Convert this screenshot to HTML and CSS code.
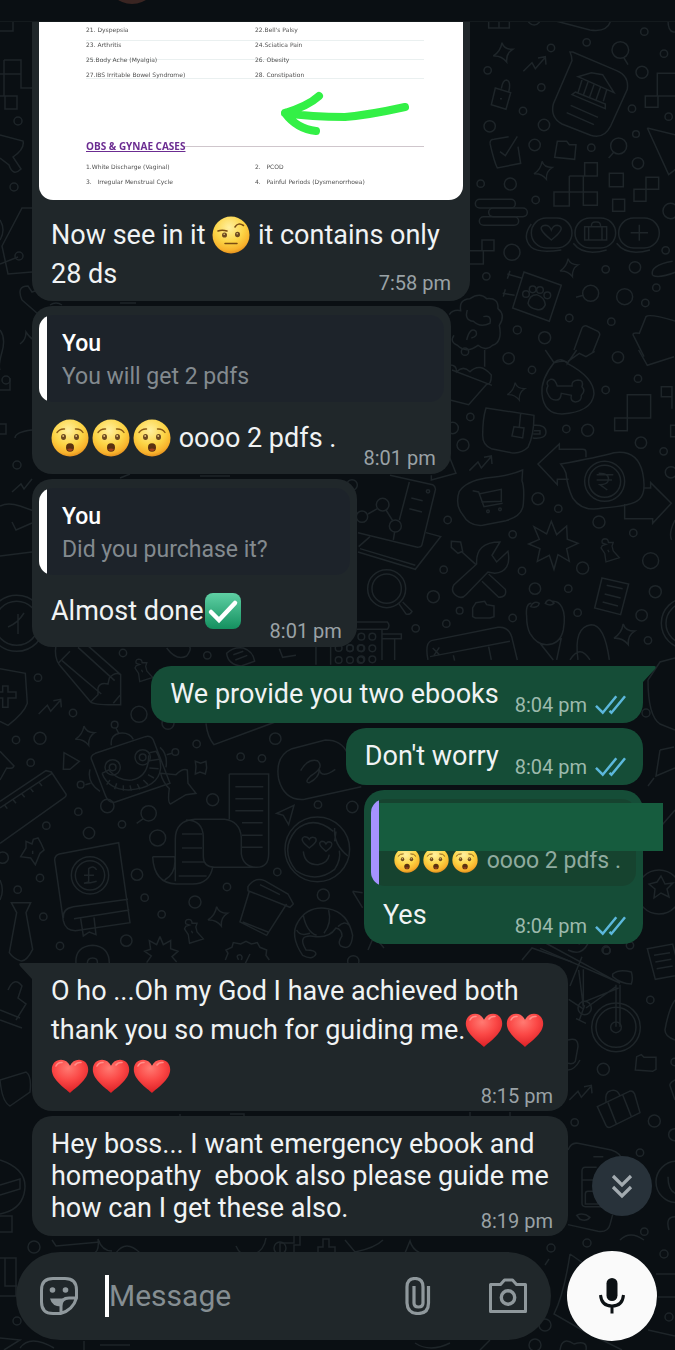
FILE: index.html
```html
<!DOCTYPE html>
<html lang="en">
<head>
<meta charset="utf-8">
<meta name="viewport" content="width=device-width, initial-scale=1">
<title>Chat</title>
<link rel="stylesheet" href="styles.css">
</head>
<body>
<svg class="defs" aria-hidden="true">
  <defs>
    <radialGradient id="face" cx="45%" cy="30%" r="72%">
      <stop offset="0" stop-color="#fff0a0"/><stop offset=".55" stop-color="#fcd445"/><stop offset=".85" stop-color="#f8b22c"/><stop offset="1" stop-color="#e08a1c"/>
    </radialGradient>
    <radialGradient id="red" cx="45%" cy="25%" r="75%">
      <stop offset="0" stop-color="#ff7a72"/><stop offset=".5" stop-color="#fb4846"/><stop offset="1" stop-color="#dc2026"/>
    </radialGradient>
    <linearGradient id="green" x1="0" y1="0" x2="0" y2="1">
      <stop offset="0" stop-color="#5fd0a4"/><stop offset="1" stop-color="#14905f"/>
    </linearGradient>
    <symbol id="wow" viewBox="0 0 38 38">
      <circle cx="19" cy="19" r="18.5" fill="url(#face)"/>
      <g fill="none" stroke="#8a5a16" stroke-width="1.4" stroke-linecap="round"><path d="M6 13.5q3-4 7.500-3.500M24.500 10q5-.5 7.500 3.500"/></g>
      <g fill="#6d4a20"><ellipse cx="12.500" cy="18" rx="2.500" ry="3"/><ellipse cx="25.500" cy="18" rx="2.500" ry="3"/></g>
      <g fill="#e8c878"><circle cx="12.200" cy="17" r=".9"/><circle cx="25.200" cy="17" r=".9"/></g>
      <ellipse cx="19" cy="28.500" rx="4" ry="4.200" fill="#5a3010"/><path d="M16 30.500q3-2 6 0-3 3-6 0z" fill="#a2401c"/>
    </symbol>
    <symbol id="brow" viewBox="0 0 38 38">
      <circle cx="19" cy="19" r="18.500" fill="url(#face)"/>
      <g fill="none" stroke="#7a4c12" stroke-width="1.500" stroke-linecap="round"><path d="M6 15q4-1.500 9 0M23 11q3-5 8.500-1.500M13 27.500h12"/></g>
      <g fill="#6d4a20"><ellipse cx="12.500" cy="19" rx="2.500" ry="2.600"/><ellipse cx="25.500" cy="18.500" rx="2.500" ry="2.800"/></g>
      <g fill="#e8c878"><circle cx="12.200" cy="18.200" r=".8"/><circle cx="25.200" cy="17.700" r=".8"/></g>
    </symbol>
    <symbol id="heart" viewBox="0 0 38 38">
      <path d="M19 36C14 31 .8 23 .8 12.500.8 6.500 5 2.800 10 2.800c4 0 7.200 2.200 9 6 1.800-3.800 5-6 9-6 5 0 9.200 3.700 9.200 9.700C37.200 23 24 31 19 36z" fill="url(#red)"/>
      <path d="M5 9q2-4 6-3.500M24 8q2-3 6-2.500" fill="none" stroke="#ff9f98" stroke-width="1.600" stroke-linecap="round" opacity=".8"/>
    </symbol>
    <symbol id="tick" viewBox="0 0 38 38">
      <rect x="1" y="1" width="36" height="36" rx="8" fill="url(#green)"/>
      <path d="M7 20l8 8 16-17" fill="none" stroke="#fff" stroke-width="4.500" stroke-linecap="round"/>
    </symbol>
    <symbol id="read" viewBox="0 0 32 20">
      <path d="M1 11l7 7L22 1M15 16l2 2L31 1" fill="none" stroke="#5cb8dc" stroke-width="2.600"/>
    </symbol>
    <symbol id="spark" viewBox="-30 -30 60 60" overflow="visible"><path d="M-4-30Q2-10 28-10 8 2 10 28-6 8-30 10-8-4-4-30z"/></symbol>
    <symbol id="zig" viewBox="0 0 70 50" overflow="visible"><path d="M0 46L26 20 36 38 64 6M44 6l22-4 2 24"/></symbol>
    <symbol id="pin" viewBox="0 0 70 80" overflow="visible"><path d="M12 14q-4-12 8-14 12 0 12 12l16 0-4 12 4 16 20 22-44 14-4-28-12-18 4-8 12-4zM30 36l4 8"/></symbol>
  </defs>
</svg>

<div class="app">
  <svg class="wallpaper" viewBox="0 0 675 1350" preserveAspectRatio="xMidYMin slice" aria-hidden="true">
    <g transform="translate(440 0) scale(.3333)">
      <path d="M146 50v34h62V50M177 50v34M265 66q18 18 34 0M350 64l100 26q50 8 62-26M684 60q0 34 16 36h20"/>
      <use href="#spark" x="160" y="128" width="60" height="60"/><use href="#zig" x="250" y="168" width="70" height="50"/>
      <use href="#spark" x="282" y="484" width="56" height="56"/><use href="#spark" x="360" y="776" width="56" height="56"/>
      <path d="M398 156l132 56q38 16 32 56l-50 110q-20 40-60 28l-86-34q-36-20-26-60l56-130q0-14-6-26z"/>
      <path d="M414 230l40-12 34 6 34 54zM426 240l-12 38M444 246l-14 40M462 254l-14 40M482 260l-14 40M500 270l-10 34M406 276l90 36v14l-100-42zM392 316l82 36M380 338l82 36"/>
      <path d="M166 264l46 14-14 50-44-14zM184 266q4-26 16-26 14 4 6 36M180 296h6"/>
      <path d="M150 430q0-12 12-12l44-8M234 440l8 50-70 14q-10-20-22-74M180 455l16 12 36-58"/>
      <path d="M352 424h28l8 10h20l-4 44-60-6zM652 720"/>
      <circle cx="541" cy="150" r="25"/><path d="M552 174l12 20"/><circle cx="536" cy="438" r="24"/><path d="M522 456l-16 18"/>
      <path d="M720 220h-68v68h-36v34h38v-34h66M622 384l90 22M622 384l64 140 26-20"/>
      <path d="M434 488h38v40h-38zM388 528h84M388 528v48h-46v42h46v-42h84v40h-42v-88M508 520h42v40h-42zM618 532h38v36h-38v36h-36v-36h36zM518 598h36v36h-36z"/>
      <rect x="106" y="598" width="120" height="26" rx="13"/><rect x="146" y="624" width="116" height="26" rx="13"/><rect x="118" y="650" width="118" height="26" rx="13"/>
      <rect x="274" y="654" width="122" height="90" rx="45"/><rect x="405" y="654" width="122" height="90" rx="45"/><rect x="536" y="654" width="122" height="90" rx="45"/>
      <path d="M274 672q-30 40 0 70 20 18 90 8M400 730q30 40 100 20M530 730q30 40 100 20M334 720q-50-40-18-44 12 0 18 14 6-14 18-14 30 6-18 44zM434 680h66v40h-66zM446 680v40M486 680v40M454 680q0-16 14-14 14-2 14 14M598 674v48M572 698h52"/>
      <path d="M126 720h36v32h-36zM90 752h40v40H90M252 816l112 40-36 108-110-40zM244 834l-42-12M224 886l-36-6M210 812l-8 24M196 868l-6 22"/>
      <path d="M264 910q4-26 26-26 24 8 26 30-8 20-28 14-20-4-24-18z"/><circle cx="258" cy="882" r="10"/><circle cx="278" cy="868" r="10"/><circle cx="300" cy="870" r="10"/><circle cx="322" cy="886" r="10"/>
      <path d="M28 944q10-16 34-12-6-34 28-36 30-20 50 0 36-4 34 30 24 20 4 50 10 50-20 60-20 20-44 0-36 26-62 0-24-10-10-30M82 930q-10 30 18 34 20 20 50 6 6-26-20-20M80 1020q10-40 28-26 6 16-14 20"/>
      <path d="M638 826q-10-30 60-42M638 826q20 10 70-10M582 1010q-10-14 16-10l20-50q10-10 90 14M582 1010l30 60M402 1050l24-66q4-8 14-6l34 16q8 6 4 14l-20 50"/>
      <circle cx="452" cy="880" r="24"/><path d="M430 886l-22 6"/>
      <g><circle cx="143" cy="211" r="11"/><circle cx="333" cy="144" r="11"/><circle cx="440" cy="127" r="11"/><circle cx="613" cy="95" r="11"/><circle cx="672" cy="161" r="11"/><circle cx="606" cy="217" r="18"/><circle cx="304" cy="262" r="11"/><circle cx="249" cy="333" r="11"/><circle cx="149" cy="379" r="17"/><circle cx="312" cy="375" r="17"/><circle cx="576" cy="326" r="11"/><circle cx="686" cy="350" r="11"/><circle cx="588" cy="402" r="10"/><circle cx="284" cy="435" r="17"/><circle cx="454" cy="443" r="11"/><circle cx="594" cy="490" r="17"/><circle cx="122" cy="551" r="11"/><circle cx="211" cy="552" r="18"/><circle cx="287" cy="600" r="11"/><circle cx="692" cy="633" r="23"/><circle cx="216" cy="757" r="24"/><circle cx="677" cy="751" r="11"/><circle cx="497" cy="808" r="11"/><circle cx="585" cy="802" r="17"/><circle cx="139" cy="829" r="11"/><circle cx="649" cy="863" r="11"/><circle cx="554" cy="890" r="24"/><circle cx="616" cy="909" r="11"/><circle cx="388" cy="954" r="11"/><circle cx="514" cy="965" r="11"/><circle cx="232" cy="990" r="12"/><circle cx="314" cy="1013" r="18"/></g>
    </g>
    <g transform="translate(340 350) scale(.3333)">
      <path d="M330 45q20 0 20 20 20-20 40 0 30-30 64 10 0 30-14 28L386 164 330 150M336 60l120 46M434 0v50"/>
      <path d="M616 0l26 38q40-10 40 2L710 0M682 40q-20-20-40-2-40 50-36 94 6 60 60 60 90-6 96-60 0-50-80-92zM684 34l34-24 20 10 26-16"/>
      <path d="M652 108q-8-24-20-20-16 6-8 20-8 14 0 24 8 20 26 18 12 0 14-20l30 6q-4 18 12 20 20-2 18-20 14-14 2-26 6-20-12-20-20 2-18 18z"/>
      <path d="M896 0l26 46 80-26M862 134h70v70h-70zM824 204h38v38h-38zM964 110h32v30h-32zM996 140v36M992 226h20v34h-20z"/>
      <path d="M438 174l144 22q0 60-18 96-20 20-50 16l-60-12q-26-10-26-40 0-50 10-82zM542 190l-4 40M522 230l30 4-4 30-32-6zM582 226q36-2 36 20 0 22-40 18M582 242h18v10h-20"/>
      <use href="#zig" x="388" y="316" width="70" height="50"/><use href="#spark" x="502" y="98" width="54" height="54"/><use href="#spark" x="822" y="822" width="64" height="64"/>
      <path d="M548 360q-40 18-110 24-60 10-80 40-14 40 10 70 20 36 60 32l70-14q50-14 52-50 4-50-4-70l2-32zM398 422l18 4 16 44 56-10M416 432l68-14v36l-60 2"/><circle cx="444" cy="484" r="4"/><circle cx="480" cy="478" r="4"/>
      <path d="M738 322v-16q0-8-10-8h-70v-16l-64 60 58 62v-16h34M662 342q110-20 160-34 70-10 86 60 12 60-10 80-20 20-110 26-60 14-90-30-16-34-20-74-4-14-16-28zM912 414h20v-16l62 62-56 60v-14h-84v-44"/>
      <circle cx="794" cy="394" r="60"/><circle cx="794" cy="394" r="48"/><path d="M770 374h50M770 390h46M776 370q36 0 28 24-4 10-24 10l22 16"/>
      <path d="M634 514l16 40 30-26 2 40 32 12-34 16 8 38-34-20-12 44-14-42-36 18 8-38-34-14 32-14-16-38 38 22z"/>
      <path d="M150 376l128 28q10 6 8 16l-40 164q-2 8-14 8L54 548M208 396l-30 114M214 444l34 8M208 476l38 10M258 548l44 12-76 98L54 606M90 560l-34 30M226 646L60 596"/>
      <circle cx="264" cy="424" r="5"/><circle cx="128" cy="464" r="19"/><circle cx="166" cy="528" r="18"/><circle cx="66" cy="500" r="17"/><path d="M84 492l28-16M138 480l20 32M164 546l-4 24"/>
      <circle cx="140" cy="716" r="57"/><circle cx="140" cy="716" r="44"/><path d="M176 760l22 32q12 4 18-8l-28-28M334 574l28 2 6 28-14 6-20-18zM366 606l42 38"/>
      <path d="M410 642q-4-66 70-66l-24 40 14 20 34-32q12 60-40 66l-20-4-66 68q-12 14-28 4-20-14-8-34zM446 672l50 46q6 24-20 24l-50-48"/>
      <path d="M274 376v14l74-20-20-50M50 816h92q10 10 0 22H50M126 840v90M126 852h58v14h-58M164 866v64M60 900"/>
      <g><circle cx="64" cy="860" r="10"/><circle cx="97" cy="860" r="10"/><circle cx="30" cy="895" r="10"/><circle cx="64" cy="895" r="10"/><circle cx="97" cy="895" r="10"/><circle cx="64" cy="928" r="10"/><circle cx="97" cy="928" r="10"/></g>
      <path d="M398 800v-26l10-16 26-4 6 10 22 4v32l-12 4h-44zM264 930q-10-50 10-58l200-40q36-4 44 40l14 58M270 920l240-46M340 916l4 16M446 890l8 40M278 894l20 20M298 892l-16 24"/>
      <path d="M574 760q-18 0-14 40 0 30 10 50 20 34 50 34 40 0 50-44 8-44-4-68-10-20-30-18M572 770q10-20 26-10-4 16-26 10zM616 760q10-20 26 0-10 10-26 0zM600 880l40 50M664 864l-14 66M714 930q-14-100 40-106 40 0 54 106M690 930q30-50 60 0"/>
      <use href="#pin" x="776" y="565" width="64" height="76"/><path d="M786 684l80 18-24 92-78-20zM800 706l48 10M794 732l48 12M788 756l46 12"/><circle cx="1040" cy="820" r="76"/><circle cx="1040" cy="820" r="62"/><path d="M1005 510q-20 40-10 60"/>
      <g><circle cx="506" cy="25" r="17"/><circle cx="576" cy="60" r="11"/><circle cx="375" cy="5" r="11"/><circle cx="834" cy="22" r="17"/><circle cx="894" cy="86" r="11"/><circle cx="797" cy="120" r="11"/><circle cx="391" cy="201" r="11"/><circle cx="338" cy="234" r="17"/><circle cx="369" cy="285" r="18"/><circle cx="679" cy="237" r="11"/><circle cx="743" cy="241" r="18"/><circle cx="903" cy="278" r="17"/><circle cx="971" cy="304" r="11"/><circle cx="993" cy="367" r="17"/><circle cx="594" cy="446" r="18"/><circle cx="655" cy="476" r="11"/><circle cx="323" cy="510" r="11"/><circle cx="518" cy="553" r="11"/><circle cx="777" cy="516" r="18"/><circle cx="880" cy="549" r="11"/><circle cx="932" cy="632" r="24"/><circle cx="728" cy="654" r="18"/><circle cx="311" cy="659" r="11"/><circle cx="546" cy="663" r="11"/><circle cx="585" cy="716" r="17"/><circle cx="685" cy="716" r="11"/><circle cx="280" cy="740" r="18"/><circle cx="946" cy="725" r="18"/><circle cx="359" cy="782" r="10"/><circle cx="319" cy="821" r="11"/><circle cx="227" cy="835" r="11"/><circle cx="518" cy="804" r="11"/><circle cx="713" cy="788" r="11"/><circle cx="905" cy="796" r="17"/><circle cx="924" cy="871" r="11"/><circle cx="36" cy="405" r="16"/></g>
    </g>
    <g transform="translate(0 640) scale(.3333)">
      <path d="M0 86l76 14 6 90q-10 30-58 66L0 244M0 156h8v-18h16v18h24v18H24v28H8v-28H0"/>
      <path d="M168 14q-6 40 10 60l94 112q10 10 90 8V104L260 14M362 104q-16-10-34 10l-4 18q-24-6-30 12v20l-22 22M176 68l34-34M186 62l118 100M234 22l110 100M340 190l20-24"/>
      <use href="#pin" x="398" y="54" width="62" height="78"/><use href="#zig" x="116" y="176" width="70" height="50"/><use href="#spark" x="226" y="258" width="60" height="60"/>
      <path d="M276 362q-8-14 10-22l150-50q16-4 24 10l50 130-164 56q-20 6-30-20zM334 316q-4-30 24-36 30-4 42 18M356 280l-8-16M306 400q20 50 80 50 90-6 96-66 0-30-14-50l-20 4M306 400l20-10q30 34 70 30 50-10 50-74M270 388q-10 40 30 66M480 322q24 20 18 60M256 434l16-4M516 340l-16 4"/>
      <path d="M330 420l-10 14M350 430l-6 18M370 436v16M390 436l4 16M412 432l8 16M430 420l14 14M444 404l18 10M448 384l28 2M448 362l30-4"/>
      <circle cx="344" cy="254" r="10"/><circle cx="526" cy="336" r="10"/><circle cx="242" cy="434" r="10"/><circle cx="322" cy="498" r="20"/><circle cx="338" cy="382" r="23"/><circle cx="338" cy="382" r="10"/><circle cx="428" cy="352" r="23"/><circle cx="428" cy="352" r="10"/>
      <path d="M192 338l46 26-28 24h-20zM482 400l46 4q20-20 34-14l2 40 24 30-30 4-46 28q-10-4-4-46-20-20-26-46zM586 364l16 6 16-6 2 20-4 18-16-6-14 6 2-22z"/>
      <path d="M0 334l42 44q-4 10-22 6L0 420M0 484l138-92 16 4 44 66q2 6-4 10L0 610M0 504l156-104M14 496l8 10M40 480l8 10M66 462l8 10M92 446l8 10M118 428l8 10"/>
      <path d="M688 402h118v240q0 40-36 40-40 0-46-40v-50q-4-48-50-54h-90q-58 4-58 60v126M688 402v136M724 600v40M558 540q50 0 52 50v60q0 30 34 32h130M458 650h66M458 650q4 80 70 82h50q50 0 60-50M524 650q6 50-30 70"/>
      <path d="M706 440h84M706 476h84M706 512h84M726 548h62M726 586h62M726 622h62M546 582h60M546 624h60M546 666h66M536 708h84"/>
      <path d="M618 250q4 40 24 64l200-74M1084 440l-170 38q-60 6-78-60-12-70 40-92l100-26q50 0 66 40M902 392q20-36 50-30 24 20-20 46-20 20-4 20 30-14 30-40 6 30 48 0"/>
      <circle cx="446" cy="520" r="23"/><path d="M430 536l-20 14M830 520l52-24-16 58-16-28z"/>
      <circle cx="952" cy="628" r="97"/><path d="M1000 574q-60-50-112-4-50 60 0 122 60 40 116-4 20-30 14-56M1004 564q-4 50 40 84M1008 574l-4 30M928 624q-34-26-14-34 10 0 14 8 6-10 18-4 10 10-18 30zM978 634q-30-24-12-30 8 0 12 8 6-10 16-4 8 10-16 26zM910 634q4 40 44 40 30-4 34-30"/>
      <path d="M744 740q20-30 50-18l70 40 16 30-10 10-126-50zM748 754l-28 92 80 40 60-94M728 846l76 30M780 734l60 30"/>
      <path d="M948 890q-60-10-30 40 30 0 30 12-10 20-40 4-40-60-14-100 30-50 90-40 60 10 74 80-4 50-36 32-10-10 4-30 0-20-18-24-20 30-60 26zM910 826q10 50 40 60M986 810q10 40-14 70M890 870q10 20 40 10M1014 860q20-20 34-4"/>
      <path d="M164 660q0-14 14-18l178-34 34 240-164 24q-30 0-36-30zM190 836q-4-30 30-36l164-22M222 836l166-26M242 836l8 52 18-12 20 8-6-52"/><circle cx="270" cy="706" r="56"/><circle cx="270" cy="706" r="44"/><path d="M290 690q-10-16-24-4v40l-14 4q20 0 38-6M252 706h30"/>
      <path d="M34 788h58l-14 30 20 110q-20 40-38 34-20-6-32-24l22-120z"/>
      <use href="#pin" x="546" y="834" width="66" height="84"/><path d="M124 612l-10-18-14 4-4 14-18-8v20l-16 26 30 4 14 20 14-34 12-10zM98 632v10"/><use href="#spark" x="624" y="800" width="60" height="60"/>
      <path d="M480 890l10 24 22-12v24l22 8-18 16 14 16M480 890l-10 24-22-12 4 26-18 6 20 14-14 20M676 960l8-20-6-10 18-8 4-14 22 4 16-8 16 8 18-4 8 14 20 8-2 16 10 14M716 960q-10-16 4-16 10 4 4 16M736 970l14-28"/>
      <path d="M228 970q-4-50 50-54 50 4 50 54M262 970q0-16 16-16t14 16M1058 754l30 50M1058 754l30 4M0 720q14 30 0 60M680 40q20-20 50-16 30 10 34 40l-40 14q-40-4-44-38zM700 44l30-10M706 60l36-14M838 26l10 26 40-6M948 20v54M992 20v54M500 24q30 40 60 24 16-20 8-30"/>
      <g><circle cx="1016" cy="24" r="10"/><circle cx="1050" cy="24" r="10"/><circle cx="1082" cy="24" r="10"/><circle cx="1016" cy="60" r="10"/><circle cx="1050" cy="60" r="10"/><circle cx="1082" cy="60" r="10"/><circle cx="50" cy="-50" r="66"/><circle cx="50" cy="-50" r="84"/></g>
      <g><circle cx="369" cy="39" r="11"/><circle cx="114" cy="113" r="11"/><circle cx="622" cy="46" r="11"/><circle cx="219" cy="219" r="11"/><circle cx="417" cy="223" r="24"/><circle cx="504" cy="250" r="18"/><circle cx="48" cy="300" r="11"/><circle cx="120" cy="295" r="18"/><circle cx="92" cy="368" r="11"/><circle cx="590" cy="312" r="11"/><circle cx="722" cy="350" r="11"/><circle cx="786" cy="355" r="11"/><circle cx="826" cy="296" r="17"/><circle cx="638" cy="479" r="18"/><circle cx="235" cy="515" r="11"/><circle cx="366" cy="553" r="11"/><circle cx="139" cy="557" r="11"/><circle cx="267" cy="579" r="17"/><circle cx="473" cy="594" r="24"/><circle cx="954" cy="494" r="11"/><circle cx="1057" cy="501" r="17"/><circle cx="8" cy="653" r="17"/><circle cx="120" cy="714" r="11"/><circle cx="53" cy="749" r="11"/><circle cx="411" cy="704" r="17"/><circle cx="681" cy="741" r="11"/><circle cx="832" cy="696" r="11"/><circle cx="434" cy="773" r="11"/><circle cx="585" cy="786" r="18"/><circle cx="485" cy="823" r="11"/><circle cx="130" cy="830" r="11"/><circle cx="180" cy="918" r="11"/><circle cx="379" cy="902" r="17"/><circle cx="970" cy="765" r="18"/><circle cx="1060" cy="964" r="17"/></g>
    </g>
    <g transform="translate(540 930) scale(.3333)">
      <path d="M0 55l240 104M0 30l240 130M126 80l-36 88M116 120l14 110M130 118l0 110M228 170l-90 64M236 174l-100 40M228 164v126M240 164v126M86 208l46 30M218 132q20-16 56-6 6 20 0 36-30 0-56-22zM84 60q40 20 60-20"/>
      <circle cx="228" cy="292" r="73"/><circle cx="228" cy="292" r="60"/><circle cx="228" cy="292" r="16"/><circle cx="134" cy="234" r="20"/><path d="M134 226l-16 44-10-4 30 14"/>
      <path d="M322 56l76-14 24 92-76 14zM342 76l48-8M346 96l48-8M350 116l48-8M405 210q-20 30-30 90 0 20 30 30M84 330q30-10 30 20l-8 44q-6 10-22 6M84 420q20 0 36-30M286 420l4-40 14-6 8 8h36v36l-10 6zM405 450q-20 10-14 20l14 40"/>
      <use href="#zig" x="88" y="464" width="70" height="50"/><path d="M172 530l96-46q10-4 16 8l16 56-90 44q-8 2-12-6zM198 516q-4-30 14-34 20-6 28 16M204 518l26 66M248 494l26 66M160 680h30M84 660q10-24 30-20l100 20q30 10 30 30M84 884l90 20q30 4 36-20l8-30M170 712h-34q-10 0-10 12v96q0 10 10 10h60M126 750h34M168 784h-24q-8 0-8 8v30h40M110 856q20-10 40 6-10 14-30 6z"/>
      <circle cx="410" cy="756" r="62"/><path d="M384 740q0 40 22 50M405 860q-30 0-18 40"/>
      <g><circle cx="200" cy="62" r="11"/><circle cx="270" cy="46" r="11"/><circle cx="331" cy="210" r="11"/><circle cx="190" cy="418" r="18"/><circle cx="104" cy="577" r="11"/><circle cx="343" cy="573" r="18"/><circle cx="300" cy="668" r="11"/><circle cx="404" cy="614" r="18"/><circle cx="313" cy="905" r="11"/><circle cx="404" cy="396" r="11"/></g>
    </g>
    <path d="M0 31h13V21M4 60h17v14H0M4 60v36M0 96h17v13H5V96M21 74v14h13M0 135l23 6q2 8-10 16l8 12q-8 8-12-4L0 158M35 208H22L2 246l6 28 24-2M0 264l18-7M22 300q-6-14 6-14l4 6q14-6 16 2M22 300l16 14M0 390h10v-12M0 424h6v10H0M15 438q0-6 17-8M12 492l9-8 3 5 8-10M0 506q8-4 20 0l14 5M12 522l4 8 16-7M0 556l32-4"/>
    <path d="M0 330q6 8 2 22t-2 18M0 220q6 10 0 20M20 344q6-4 6-12 4 6 8 8M8 627q10-4 16-14M18 614v20"/>
    <circle cx="18" cy="121" r="4"/><circle cx="14" cy="187" r="4"/><circle cx="19" cy="256" r="4"/><circle cx="6" cy="380" r="4"/><circle cx="17" cy="465" r="4"/>
    <path d="M648 680l12-18 15-4M648 680q0 36 12 44l15 6M660 750l-4 26 19-8M660 750l14-3M648 786l6-8M656 832l19-22M661 876l4 8 8-1-6 6 2 8-8-4-7 5 1-9-6-5 8-2z"/><circle cx="659" cy="892" r="22"/><circle cx="646" cy="713" r="4"/>
    <path d="M368 950l6-14 10 12M522 960l10-12 40 14M560 942l30-8M540 930l40 14M620 940l20-6"/><circle cx="606" cy="950" r="4"/>
    <path d="M8 990q6-14 14-4l-4 12 8 6-10 16M0 1010l20 8M0 1020l22 8M0 1080l26-8q6 4 4 20l-20 14q-8-4-10-26M0 1160q30 10 24 34-4 16-24 20M0 1185l20-6v10l-20 6M0 1216h12v16H0M0 1258h16v38H0M5 1258v28h12M52 1240l4 6 44-4M236 1246q4 10 14 10 14-4 16-18M280 1253v-10h14v-8h6v10h-6v8M318 1253v-6h5v-8h6v8h6v6M345 1240l10 12q20-4 28-12M405 1253l5-12q2 8 10 12M116 1253q10-14 24 0M90 1253q10 2 8-14 4 12 14 12"/>
    <path d="M570 1254q-6 40-16 60l28 16 40 20M570 1254l20 14M656 1274h19M658 1297h17M648 1330l27 6M545 1265l4-6M0 1338l20 2-16 10M20 1348q10-14 34 0M84 1341v9M100 1345h30M560 1350q2-14 14-6 14-4 12 6M620 1240q10-10 24 0M480 1350l10-10M415 1343q15 10 35 0"/>
    <circle cx="34" cy="1247" r="6"/><circle cx="280" cy="1248" r="6"/><circle cx="551" cy="1248" r="4"/><circle cx="587" cy="1243" r="4"/><circle cx="664" cy="1254" r="4"/><circle cx="669" cy="1317" r="4"/><circle cx="545" cy="1325" r="6"/><circle cx="535" cy="1345" r="6"/><circle cx="17" cy="1321" r="4"/>
    <path d="M50 305q6-4 12 0M120 303l16 0M180 1114v4M230 1114h14v4M470 1112v5M510 1112v5M120 478l10-4M200 476h30" />
  </svg>

  <header class="topbar"><span class="avatar"></span></header>

  <main class="chat">
    <article class="bubble in first">
      <div class="picture">
        <div class="doc">
          <ol class="cases ruled">
            <li>21. Dyspepsia</li><li>22.Bell's Palsy</li>
            <li>23. Arthritis</li><li>24.Sciatica Pain</li>
            <li>25.Body Ache (Myalgia)</li><li>26. Obesity</li>
            <li>27.IBS Irritable Bowel Syndrome)</li><li>28. Constipation</li>
          </ol>
          <h2 class="doc-title">OBS &amp; GYNAE CASES</h2>
          <ol class="cases">
            <li>1.White Discharge (Vaginal)</li><li>2. &nbsp; PCOD</li>
            <li>3. &nbsp; Irregular Menstrual Cycle</li><li>4. &nbsp; Painful Periods (Dysmenorrhoea)</li>
          </ol>
        </div>
        <svg class="arrow" viewBox="0 0 130 46" aria-hidden="true"><path d="M38 5Q27 15 4 22M4 22Q16 38 35 40M4 22Q30 26 64 26 88 24 124 16" fill="none" stroke="#33f046" stroke-width="8" stroke-linecap="round" stroke-linejoin="round"/></svg>
      </div>
      <div class="body long">
        <p class="text">Now see in it <svg class="emoji" role="img" aria-label="raised eyebrow"><use href="#brow"/></svg> it contains only 28 ds</p>
        <div class="meta"><time>7:58 pm</time></div>
      </div>
    </article>

    <article class="bubble in">
      <blockquote class="quote"><strong>You</strong><span>You will get 2 pdfs</span></blockquote>
      <div class="body">
        <p class="text"><svg class="emoji" role="img" aria-label="wow"><use href="#wow"/></svg><svg class="emoji" role="img" aria-label="wow"><use href="#wow"/></svg><svg class="emoji" role="img" aria-label="wow"><use href="#wow"/></svg> oooo 2 pdfs .</p>
        <div class="meta"><time>8:01 pm</time></div>
      </div>
    </article>

    <article class="bubble in">
      <blockquote class="quote"><strong>You</strong><span>Did you purchase it?</span></blockquote>
      <div class="body">
        <p class="text">Almost done<svg class="emoji" role="img" aria-label="done"><use href="#tick"/></svg></p>
        <div class="meta"><time>8:01 pm</time></div>
      </div>
    </article>

    <article class="bubble out turn">
      <svg class="tail" viewBox="0 0 34 18" aria-hidden="true"><path d="M0 0h32q3 0 1 3L21 16v2H0z"/></svg>
      <div class="body">
        <p class="text">We provide you two ebooks</p>
        <div class="meta"><time>8:04 pm</time><svg class="ticks" role="img" aria-label="Read"><use href="#read"/></svg></div>
      </div>
    </article>

    <article class="bubble out">
      <div class="body">
        <p class="text">Don't worry</p>
        <div class="meta"><time>8:04 pm</time><svg class="ticks" role="img" aria-label="Read"><use href="#read"/></svg></div>
      </div>
    </article>

    <article class="bubble out">
      <blockquote class="quote"><strong>&nbsp;</strong><span><svg class="mini" role="img" aria-label="wow"><use href="#wow"/></svg><svg class="mini" role="img" aria-label="wow"><use href="#wow"/></svg><svg class="mini" role="img" aria-label="wow"><use href="#wow"/></svg> oooo 2 pdfs .</span><i class="cover"></i></blockquote>
      <div class="body">
        <p class="text">Yes</p>
        <div class="meta"><time>8:04 pm</time><svg class="ticks" role="img" aria-label="Read"><use href="#read"/></svg></div>
      </div>
    </article>

    <article class="bubble in turn">
      <svg class="tail" viewBox="0 0 34 18" aria-hidden="true"><path d="M34 0H2q-3 0-1 3l12 13v2h21z"/></svg>
      <div class="body long">
        <p class="text">O ho ...Oh my God I have achieved both thank you so much for guiding me.<svg class="emoji" role="img" aria-label="heart"><use href="#heart"/></svg><svg class="emoji" role="img" aria-label="heart"><use href="#heart"/></svg><br><svg class="emoji" role="img" aria-label="heart"><use href="#heart"/></svg><svg class="emoji" role="img" aria-label="heart"><use href="#heart"/></svg><svg class="emoji" role="img" aria-label="heart"><use href="#heart"/></svg></p>
        <div class="meta"><time>8:15 pm</time></div>
      </div>
    </article>

    <article class="bubble in">
      <div class="body long">
        <p class="text">Hey boss... I want emergency ebook and homeopathy&nbsp; ebook also please guide me how can I get these also.</p>
        <div class="meta"><time>8:19 pm</time></div>
      </div>
    </article>

    <button class="jump" type="button" aria-label="Scroll to latest">
      <svg viewBox="0 0 24 26" aria-hidden="true"><path d="M3 3l9 9 9-9M3 14l9 9 9-9" fill="none" stroke="#a3abb0" stroke-width="3.200"/></svg>
    </button>
  </main>

  <form class="composer">
    <div class="field">
      <button class="icon" type="button" aria-label="Stickers">
        <svg viewBox="0 0 38 38" aria-hidden="true"><path d="M20.500 36.500H13Q1.500 36.500 1.500 25V13Q1.500 1.500 13 1.500h12Q36.500 1.500 36.500 13v8Q33 33 20.500 36.500zM21 36q0-3 0-7 0-8 8-8h7.500" fill="none" stroke="#8f989c" stroke-width="3" stroke-linejoin="round"/><circle cx="12.500" cy="13" r="2.800" fill="#8f989c"/><circle cx="25.500" cy="13" r="2.800" fill="#8f989c"/><path d="M10 21.500h17q-5 2-6 8-9 0-11-8z" fill="#8f989c"/></svg>
      </button>
      <label class="entry"><i class="caret"></i><input type="text" placeholder="Message" aria-label="Message"></label>
      <button class="icon" type="button" aria-label="Attach">
        <svg class="clip" viewBox="0 0 26 38" aria-hidden="true"><path d="M23.500 9v17q0 10.500-10.500 10.500T2 26V10q0-8.500 8-8.500T18 10v16q0 4-4.500 4T9 26V9" fill="none" stroke="#8f989c" stroke-width="3.200"/></svg>
      </button>
      <button class="icon" type="button" aria-label="Camera">
        <svg viewBox="0 0 38 38" aria-hidden="true"><path d="M1.500 7.500h10l4-4.500h8l4 4.500h9v27h-35z" fill="none" stroke="#8f989c" stroke-width="3" stroke-linejoin="round"/><circle cx="19" cy="20.500" r="6.700" fill="none" stroke="#8f989c" stroke-width="3.400"/></svg>
      </button>
    </div>
    <button class="mic" type="button" aria-label="Record voice message">
      <svg viewBox="0 0 26 36" aria-hidden="true"><rect x="7.500" y="0" width="11" height="23" rx="5.500" fill="#0c1114"/><path d="M1.500 17q1 11 11.500 11t11.500-11M13 28v7.500" fill="none" stroke="#0c1114" stroke-width="3"/></svg>
    </button>
  </form>
</div>
</body>
</html>
```
FILE: styles.css
```css
* { box-sizing: border-box; }

body {
  margin: 0;
  background: #0a0f13;
  color: #f0f3f4;
  font-family: Roboto, "Liberation Sans", sans-serif;
}

p, h2, ol, blockquote { margin: 0; padding: 0; }
button { border: 0; padding: 0; background: none; }

.defs { position: absolute; width: 0; height: 0; }

.app {
  position: relative;
  display: flex;
  flex-direction: column;
  min-height: 100vh;
  overflow: hidden;
}

.wallpaper {
  position: absolute;
  inset: 0;
  width: 100%;
  height: 100%;
  fill: none;
  stroke: #1e2529;
  stroke-width: 1.5px;
}
.wallpaper g[transform] { stroke-width: 4.5px; }

.topbar {
  position: relative;
  height: 22px;
  background: #0a0f13;
  border-bottom: 1px solid #141a1d;
  overflow: hidden;
}
.avatar {
  position: absolute;
  left: 106px;
  bottom: 17px;
  width: 52px;
  height: 52px;
  border-radius: 50%;
  background: #3a2522;
}

.chat {
  position: relative;
  flex: 1;
  display: flex;
  flex-direction: column;
  align-items: flex-start;
  gap: 5px;
  padding: 0 32px;
}

.bubble {
  position: relative;
  max-width: 536px;
  border-radius: 20px;
  background: #20272a;
}
.bubble.out { align-self: flex-end; background: #154d37; }
.bubble.turn { margin-top: 14px; }
.bubble.in.turn { border-top-left-radius: 0; }
.bubble.out.turn { border-top-right-radius: 0; }
.bubble.first {
  width: 438px;
  border-radius: 0 0 20px 20px;
}

.tail { position: absolute; top: 0; width: 34px; height: 18px; }
.in .tail { left: -13px; fill: #20272a; }
.out .tail { right: -13px; fill: #154d37; }

.picture {
  position: relative;
  margin: 0 7px;
  border-radius: 0 0 14px 14px;
  background: #fff;
  overflow: hidden;
}
.doc {
  padding: 0 39px 11px 47px;
  color: #505050;
  font-family: "DejaVu Sans", sans-serif;
  font-size: 6px;
  filter: blur(0.6px);
}
.cases {
  display: grid;
  grid-template-columns: 1fr 1fr;
  list-style: none;
  line-height: 15px;
  white-space: nowrap;
}
.ruled {
  background: repeating-linear-gradient(#fff 0 18px, #eaf0f0 18px 19px);
}
.doc-title {
  display: flex;
  align-items: center;
  margin: 56px 0 5px;
  color: #6b2c91;
  font: bold 10px/16px "Open Sans", sans-serif;
  text-decoration: underline;
}
.doc-title::after {
  content: "";
  flex: 1;
  height: 1px;
  background: #cfc6cc;
}
.arrow {
  position: absolute;
  left: 242px;
  top: 69px;
  width: 130px;
  height: 46px;
}

.quote {
  position: relative;
  display: flex;
  flex-direction: column;
  justify-content: center;
  height: 87px;
  margin: 0 7px 1px;
  padding: 3px 15px 0 23px;
  border-radius: 14px;
  background: linear-gradient(90deg, #fff 8px, #1d232a 8px);
  color: #838a8f;
  font-size: 23px;
  line-height: 33px;
}
.bubble:has(.quote) { padding-top: 9px; }
.quote strong { color: #fff; font-weight: 500; }
.out .quote {
  background: linear-gradient(90deg, #a592ff 8px, #16432f 8px);
  color: #8fab9f;
}
.mini { width: 26px; height: 26px; margin-right: 3px; vertical-align: -5px; }
.cover {
  position: absolute;
  left: 8px;
  right: -27px;
  top: 4px;
  height: 48px;
  background: #165c3e;
}

.body {
  display: flex;
  align-items: flex-end;
  justify-content: space-between;
  gap: 27px;
  padding: 12px 15px 4px 19px;
}
.text {
  margin-bottom: 9px;
  font-size: 27px;
  line-height: 32px;
}
.out .body { gap: 16px; padding: 12px 17px 6px 19px; }
.out .text { margin-bottom: 7px; }
.emoji { width: 38px; height: 38px; margin: 4px 1px 4px 0; vertical-align: -14px; }
.emoji + .emoji { margin-left: 2px; }

.meta {
  display: flex;
  align-items: center;
  gap: 8px;
  color: #9aa2a6;
  font-size: 20px;
  line-height: 24px;
  white-space: nowrap;
}
.out .meta { color: #9dbaad; }
.ticks { width: 31px; height: 20px; }

.body.long { display: block; padding-bottom: 3px; }
.long .meta { justify-content: flex-end; margin-top: -24px; }
.first .body { padding-bottom: 6px; }
.first .text { margin-bottom: 5px; }
.first .meta { padding-right: 4px; }

.jump {
  position: absolute;
  right: 23px;
  bottom: 35px;
  display: grid;
  place-items: center;
  width: 60px;
  height: 60px;
  border-radius: 50%;
  background: #28323a;
}
.jump svg { width: 24px; height: 26px; }

.composer {
  position: relative;
  display: flex;
  align-items: center;
  gap: 16px;
  padding: 0 18px 9px 16px;
}
.field {
  flex: 1;
  min-width: 0;
  display: flex;
  align-items: center;
  gap: 24px;
  height: 88px;
  padding: 0 24px;
  border-radius: 44px;
  background: #20272a;
}
.icon { flex: none; }
.icon svg { display: block; width: 38px; height: 38px; }
.icon .clip { width: 26px; }
.entry { flex: 1; display: flex; align-items: center; min-width: 0; }
.caret { flex: none; width: 4px; height: 42px; margin-left: 3px; background: #fff; }
.entry input {
  width: 100%;
  min-width: 0;
  border: 0;
  padding: 0;
  outline: 0;
  background: none;
  color: #f0f3f4;
  font: 30px/40px Roboto, "Liberation Sans", sans-serif;
}
.entry input::placeholder { color: #858e92; opacity: 1; }
.icon:last-child { margin-left: 34px; }
.mic {
  flex: none;
  display: grid;
  place-items: center;
  width: 90px;
  height: 90px;
  border-radius: 50%;
  background: #fafafa;
}
.mic svg { width: 26px; height: 36px; }
```
